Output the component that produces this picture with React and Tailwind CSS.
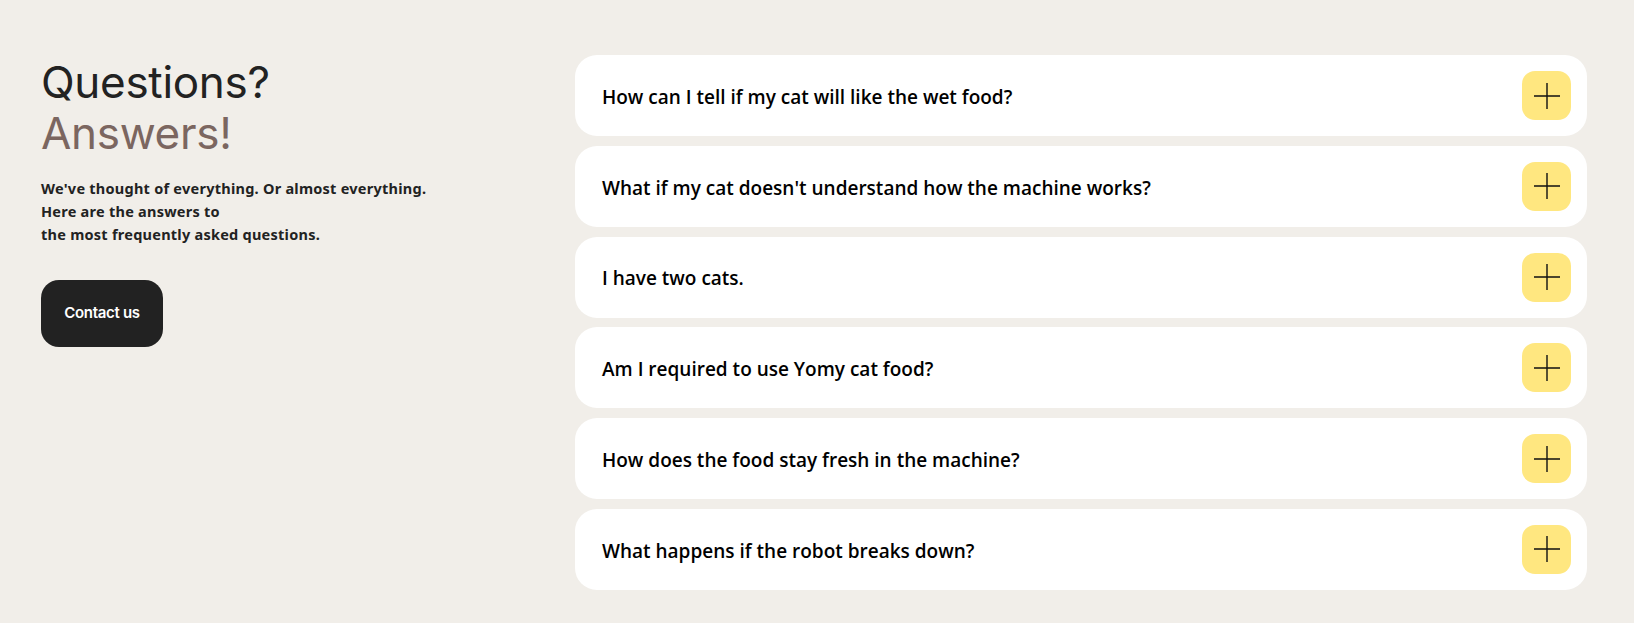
import React from 'react';

const questions = [
  'How can I tell if my cat will like the wet food?',
  "What if my cat doesn't understand how the machine works?",
  'I have two cats.',
  'Am I required to use Yomy cat food?',
  'How does the food stay fresh in the machine?',
  'What happens if the robot breaks down?',
];

const PlusIcon = () => (
  <svg width="26" height="26" viewBox="0 0 26 26" fill="none">
    <path d="M13 0v26M0 13h26" stroke="#111" strokeWidth="1.4" />
  </svg>
);

const FaqItem = ({ text }) => (
  <div className="flex h-[81px] items-center justify-between rounded-[22px] bg-white pl-[27px] pr-[16px]">
    <span className="pt-[3px] font-['Open_Sans',sans-serif] text-[19px] font-semibold text-black">{text}</span>
    <button className="flex h-[49px] w-[49px] items-center justify-center rounded-[13px] bg-[#ffe780]">
      <PlusIcon />
    </button>
  </div>
);

export default function App() {
  return (
    <div className="min-h-[623px] bg-[#f1eee9] pt-[55px] pb-8">
      <div className="flex pl-[41px] pr-[47px]">
        <div className="w-[534px] shrink-0 pt-[2px]">
          <h2 className="font-['Inter',sans-serif] text-[44px] font-normal leading-[51px] tracking-[-0.3px] text-[#222]">
            Questions?
            <br />
            <span className="text-[#7b6660]">Answers!</span>
          </h2>
          <p className="mt-[18px] font-['Noto_Sans',sans-serif] text-[14.5px] font-bold leading-[23px] tracking-[0.25px] text-[#222]">
            We've thought of everything. Or almost everything.
            <br />
            Here are the answers to
            <br />
            the most frequently asked questions.
          </p>
          <button className="mt-[34px] h-[67px] w-[122px] rounded-[18px] bg-[#222] font-['Inter',sans-serif] text-[15px] font-semibold tracking-[-0.3px] text-white">
            Contact us
          </button>
        </div>
        <div className="flex flex-1 flex-col gap-[9.8px]">
          {questions.map((q) => (
            <FaqItem key={q} text={q} />
          ))}
        </div>
      </div>
    </div>
  );
}
